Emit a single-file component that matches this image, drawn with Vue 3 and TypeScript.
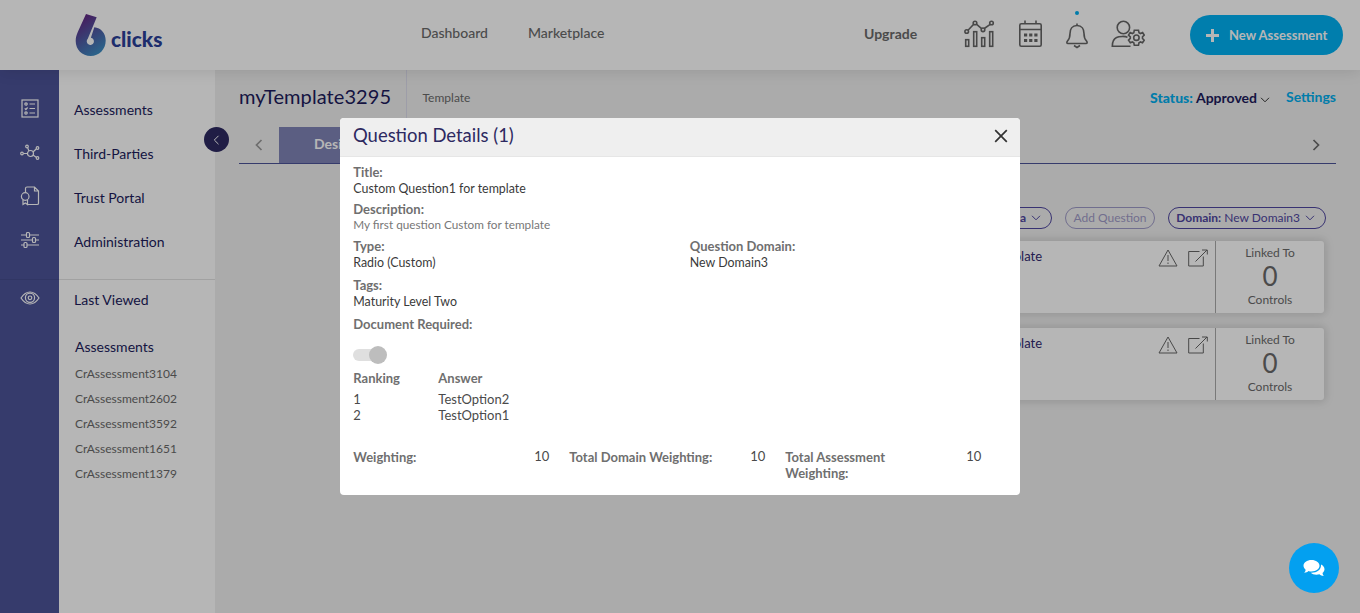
<script setup lang="ts">
interface Detail { label: string; value: string }

const navLinks: string[] = ['Assessments', 'Third-Parties', 'Trust Portal', 'Administration']
const recent: string[] = ['CrAssessment3104', 'CrAssessment2602', 'CrAssessment3592', 'CrAssessment1651', 'CrAssessment1379']
const questions: string[] = ['Custom Question1 for template', 'Custom Question2 for template']
const answers: { rank: number; text: string }[] = [
  { rank: 1, text: 'TestOption2' },
  { rank: 2, text: 'TestOption1' },
]
const weights: Detail[] = [
  { label: 'Weighting:', value: '10' },
  { label: 'Total Domain Weighting:', value: '10' },
  { label: 'Total Assessment Weighting:', value: '10' },
]
</script>

<template>
  <div class="page">
    <header class="topbar">
      <div class="logo">
        <svg width="32" height="44" viewBox="0 0 32 44">
          <defs>
            <linearGradient id="brand" x1="0.2" y1="0" x2="0.7" y2="1">
              <stop offset="0" stop-color="#66207f" />
              <stop offset="0.5" stop-color="#4f59a3" />
              <stop offset="1" stop-color="#3b8fc4" />
            </linearGradient>
          </defs>
          <path fill="url(#brand)" d="M11 1 21.700 4.300 12.800 25.800A3.600 3.600 0 1 0 15.900 24.800L19.300 14.300C26 14.800 30.700 20.500 30.700 27.500 30.700 36.500 24 43 15.700 43 7 43 .7 36.500.7 28 .7 24.500 1.500 22 3 18.500Z" />
        </svg>
        <span class="logo-text">clicks</span>
      </div>
      <nav class="topnav">
        <span>Dashboard</span>
        <span>Marketplace</span>
      </nav>
      <div class="tools">
        <span class="upgrade">Upgrade</span>
        <svg class="ico chart" width="31" height="28" viewBox="0 0 31 28">
          <rect x="1.700" y="19.700" width="3" height="6.600" /><rect x="9.700" y="11.700" width="3" height="14.600" />
          <rect x="17.700" y="17.700" width="3" height="8.600" /><rect x="25.700" y="11.700" width="3" height="14.600" />
          <circle cx="2.700" cy="11.500" r="1.800" /><circle cx="11" cy="3" r="1.800" /><circle cx="19" cy="9.800" r="1.800" /><circle cx="27.500" cy="3" r="1.800" />
          <path d="M4 10.200 9.700 4.300M12.400 4.200 17.600 8.600M20.300 8.500 26.200 4.300" />
        </svg>
        <svg class="ico cal" width="25" height="28" viewBox="0 0 25 28">
          <rect x="1.800" y="3.800" width="21.400" height="22.400" rx="1.500" /><path d="M2 9.500H23M7 0.500V4M18 0.500V4" />
          <path class="dots" d="M6 15H19.500M6 20.500H19.500" stroke-dasharray="3.200 1.950" />
        </svg>
        <div class="bell-wrap">
          <i class="notice"></i>
          <svg class="ico" width="22" height="26" viewBox="0 0 22 26">
            <path d="M11 0.500V3M11 2.500C6 2.500 4 6.500 4 10.500 4 15 3 16.500 1.500 18 0.500 19.500 0.700 20.500 2 20.500H20C21.300 20.500 21.500 19.500 20.500 18 19 16.500 18 15 18 10.500 18 6.500 16 2.500 11 2.500ZM8 22.500 11 24.500 14 22.500" />
          </svg>
        </div>
        <svg class="ico user" width="35" height="28" viewBox="0 0 35 28">
          <circle cx="13.400" cy="7.500" r="6.200" /><path d="M17.500 17.300C15.500 16 9 16.200 6.500 17.500 3 19.200 2.300 22 2.300 26.200H20.500" />
          <path d="m24.300 10.300 4.200 0 .5 2.400 1.500.8 2.100-.9 1.600 2.500-1.700 1.700v1.600l1.700 1.800-1.700 2.500-2-.8-1.500.9-.5 2.400h-4.200l-.5-2.400-1.500-.9-2 .8-1.800-2.500 1.800-1.800v-1.600l-1.800-1.700 1.700-2.500 2.100.9 1.500-.8Z" />
          <circle cx="26.400" cy="17.700" r="2.700" />
        </svg>
        <button class="new-btn"><svg width="13" height="13" viewBox="0 0 13 13"><path d="M6.500 0V13M0 6.500H13" stroke="#fff" stroke-width="3" /></svg>New Assessment</button>
      </div>
    </header>

    <div class="body">
      <aside class="rail">
        <div class="rail-top">
          <svg width="18" height="19" viewBox="0 0 18 19"><rect x="1" y="1" width="16" height="17" /><circle cx="5" cy="5" r="1.200" /><path d="m3.700 9.300 1.200 1.200 1.700-2M8.500 5H14M8.500 9.500H14M8.500 14H14" /><circle cx="5" cy="14" r="1.200" /></svg>
          <svg width="20" height="17" viewBox="0 0 20 17"><circle cx="10.500" cy="9.500" r="3" /><circle cx="2" cy="9.500" r="1.300" /><circle cx="7" cy="2.500" r="1.300" /><circle cx="17.500" cy="4" r="1.300" /><circle cx="17.500" cy="14" r="1.300" /><path d="M3.500 9.500H7.500M7.700 4 9 7M13 8 16.200 5M13 11 16.200 13.200" /></svg>
          <svg width="20" height="20" viewBox="0 0 20 20"><path d="M5.500 6V2.500Q5.500 1 7 1H14.500L18.500 5V17.500Q18.500 18.500 17 18.500H8M14.500 1V5H18.500M3 14V18.500L5.300 17 7.500 18.500V14" /><circle cx="5.200" cy="10.500" r="3.800" /></svg>
          <svg width="20" height="18" viewBox="0 0 20 18"><path d="M1 4H6.500M9.500 4H19M1 9H12.500M15.500 9H19M1 14H4M7 14H19" /><rect x="6.500" y="1.500" width="3" height="5" rx="1" /><rect x="12.500" y="6.500" width="3" height="5" rx="1" /><rect x="4" y="11.500" width="3" height="5" rx="1" /></svg>
        </div>
        <div class="rail-bottom">
          <svg width="20" height="14" viewBox="0 0 20 14"><path d="M1 7Q5 1 10 1T19 7Q15 13 10 13T1 7Z" /><circle cx="10" cy="6.800" r="4.600" /><circle cx="10" cy="6.800" r="1.800" /></svg>
        </div>
      </aside>

      <aside class="side">
        <div class="links"><span v-for="l in navLinks" :key="l">{{ l }}</span></div>
        <div class="recent">
          <span class="last">Last Viewed</span>
          <span class="group">Assessments</span>
          <span v-for="r in recent" :key="r" class="item">{{ r }}</span>
        </div>
        <div class="collapse"><svg width="7" height="10" viewBox="0 0 7 10"><path d="M5.500 .8 1.300 5 5.500 9.200" fill="none" stroke="#fff" /></svg></div>
      </aside>

      <main class="main">
        <div class="heading">
          <h1>myTemplate3295</h1>
          <span class="kind">Template</span>
          <div class="status"><b>Status:</b><span>Approved</span><svg width="10" height="6" viewBox="0 0 10 6"><path d="m1 .8 4 4 4-4" /></svg></div>
          <span class="settings">Settings</span>
        </div>
        <div class="tabs">
          <svg class="prev" width="8" height="12" viewBox="0 0 8 12"><path d="M6.500 1 1.500 6 6.500 11" /></svg>
          <div class="tab">Design</div>
          <svg class="next" width="8" height="12" viewBox="0 0 8 12"><path d="M1.500 1 6.500 6 1.500 11" /></svg>
        </div>
        <div class="pills">
          <div class="pill first"><b>Criteria</b><svg width="10" height="6" viewBox="0 0 10 6"><path d="m1 .8 4 4 4-4" /></svg></div>
          <div class="pill off">Add Question</div>
          <div class="pill domain"><span><b>Domain:</b> New Domain3</span><svg width="10" height="6" viewBox="0 0 10 6"><path d="m1 .8 4 4 4-4" /></svg></div>
        </div>
        <section v-for="q in questions" :key="q" class="card">
          <div class="card-main">
            <span class="q">{{ q }}</span>
            <svg width="20" height="18" viewBox="0 0 20 18"><path d="M10 1 19 17H1ZM10 6V12" /><path d="M10 13.500V15" /></svg>
            <svg width="20" height="18" viewBox="0 0 20 18"><path d="M11.500 2.500H.7V17H15.300V7.500M7.500 12.500 19 1M14 1H19.300V5.500" /></svg>
          </div>
          <div class="linked"><span>Linked To</span><strong>0</strong><span>Controls</span></div>
        </section>
      </main>
    </div>

    <div class="backdrop">
      <div class="modal">
        <div class="modal-head">
          <h2>Question Details (1)</h2>
          <svg width="14" height="14" viewBox="0 0 14 14"><path d="M1.200 1.200 12.800 12.800M12.800 1.200 1.200 12.800" /></svg>
        </div>
        <div class="modal-body">
          <div class="field f1"><b>Title:</b><span>Custom Question1 for template</span></div>
          <div class="field f2"><b>Description:</b><span class="muted">My first question Custom for template</span></div>
          <div class="pair">
            <div class="field"><b>Type:</b><span>Radio (Custom)</span></div>
            <div class="field"><b>Question Domain:</b><span>New Domain3</span></div>
          </div>
          <div class="field f4"><b>Tags:</b><span>Maturity Level Two</span></div>
          <div class="field f5"><b>Document Required:</b></div>
          <div class="toggle"><i></i></div>
          <div class="answers">
            <b>Ranking</b><b>Answer</b>
            <template v-for="a in answers" :key="a.rank"><span>{{ a.rank }}</span><span>{{ a.text }}</span></template>
          </div>
          <div class="weights">
            <div v-for="w in weights" :key="w.label" class="weight"><b>{{ w.label }}</b><span>{{ w.value }}</span></div>
          </div>
        </div>
      </div>
    </div>

    <div class="chat">
      <svg width="22" height="18" viewBox="0 0 22 18"><path fill="#fff" d="M8.500 1C13 1 16.500 3.500 16.500 6.800S13 12.500 8.500 12.500C7.300 12.500 6.500 12.400 5.500 12 4.500 13 3 13.700 1.200 13.700 2 12.800 2.500 12 2.600 10.700 1.300 9.600.5 8.300.5 6.800.5 3.500 4 1 8.500 1ZM18 5.500C20 6.500 21.500 8 21.500 10.200 21.500 11.700 20.700 13 19.500 14 19.600 15.200 20.200 16.200 20.800 17 19 17 17.500 16.300 16.500 15.300 13 16.200 9.500 15.500 7.700 13.700 13.500 14 18.500 11 18 5.500Z" /></svg>
    </div>
  </div>
</template>

<style>
body { margin: 0; overflow: hidden; }
</style>

<style scoped>
* { box-sizing: border-box; }
.page { position: relative; display: flex; flex-direction: column; width: 1360px; height: 613px; overflow: hidden; font-family: Lato, "Open Sans", sans-serif; font-size: 14px; color: #6a6a6a; background: #f0f0f0; font-variant-ligatures: common-ligatures; }
.topbar { position: relative; z-index: 2; display: flex; height: 70px; background: #fff; box-shadow: 0 2px 14px rgba(0, 0, 0, .1); }
.logo { display: flex; width: 421px; padding: 13px 0 0 75px; }
.logo-text { margin: 14px 0 0 4px; font-size: 20.800px; line-height: 24px; font-weight: 900; color: #2a3f99; }
.topnav { display: flex; gap: 40px; padding-top: 24px; font-size: 14px; line-height: 18px; font-weight: 500; width: 443px; }
.tools { display: flex; align-items: flex-start; }
.upgrade { margin-top: 25px; width: 100px; line-height: 18px; font-weight: 700; }
.ico { fill: none; stroke: #666; stroke-width: 1.600; display: block; }
.chart { margin-top: 20px; }
.cal { margin: 20px 0 0 23px; }
.dots { stroke-width: 3.200; }
.bell-wrap { margin: 11px 0 0 23px; display: flex; flex-direction: column; align-items: center; gap: 8px; }
.notice { width: 4px; height: 4px; border-radius: 2px; background: #00aeef; }
.user { margin: 20px 0 0 22px; }
.new-btn { display: flex; align-items: center; gap: 10px; width: 153px; height: 40px; margin: 15px 0 0 45px; padding: 0 0 0 16px; border: 0; border-radius: 20px; background: #00b1f3; color: #fff; font: 700 13px Lato, sans-serif; white-space: nowrap; }
.body { display: flex; flex: 1; }
.rail { width: 59px; background: #4c5398; }
.rail svg { fill: none; stroke: #fff; stroke-width: 1.200; }
.rail-top { display: grid; grid-template-rows: repeat(4, 44px); height: 210px; padding-top: 16px; border-bottom: 1px solid #454c8c; }
.rail-top svg { margin: auto; }
.rail-bottom { display: flex; justify-content: center; padding-top: 11px; }
.side { position: relative; width: 156px; background: #fff; color: #201b5c; font-size: 14px; }
.links { display: flex; flex-direction: column; height: 210px; padding: 18px 0 0 15px; border-bottom: 1px solid #e2e2e2; line-height: 44px; letter-spacing: 0; }
.recent { display: flex; flex-direction: column; padding-left: 15px; }
.last { line-height: 20px; margin-top: 10px; }
.group { padding-left: 1px; line-height: 20px; margin: 27px 0 4px; }
.item { padding-left: 1px; font-size: 12px; line-height: 25px; color: #6a6a6a; }
.collapse { position: absolute; right: -14px; top: 57px; width: 25px; height: 25px; border-radius: 50%; background: #2d2961; display: flex; align-items: center; justify-content: center; }
.main { flex: 1; padding: 0 24px; }
.heading { display: flex; height: 57px; line-height: 20px; }
h1 { margin: 0; width: 168px; padding-top: 16px; font-size: 20px; line-height: 21px; font-weight: 400; letter-spacing: .08px; color: #201b5c; border-right: 1px solid #dcdcec; }
.kind { padding: 18px 0 0 15.500px; font-size: 12px; }
.status { display: flex; gap: 3px; align-items: center; height: 38px; margin-left: auto; padding-top: 18px; font-weight: 700; color: #201b5c; }
.status b, .settings { color: #00aeef; }
.settings { padding: 17px 0 0 16px; font-weight: 700; }
.status svg { margin-top: 4px; fill: none; stroke: #333; }
.tabs { display: flex; align-items: center; height: 37px; border-bottom: 1px solid #4c5398; }
.tabs svg { fill: none; stroke: #6a6a6a; stroke-width: 1.700; }
.tabs .prev { margin: 0 16px; stroke: #999; }
.tab { width: 113px; height: 36px; line-height: 33px; text-align: center; background: #8084b7; color: #fff; font-weight: 700; font-size: 14px; }
.next { margin: 0 16px 0 auto; }
.pills { display: flex; justify-content: flex-end; align-items: center; margin: 43px 10px 12px 0; color: #4f46a0; font-size: 12px; }
.pill { display: flex; align-items: center; justify-content: flex-end; height: 22px; padding: 0 10px 1px 0; border: 1px solid #4f46a0; border-radius: 11px; }
.pill svg { fill: none; stroke: currentColor; }
.first { width: 90px; gap: 5px; margin-right: 13px; }
.off { width: 90px; justify-content: center; padding: 0 0 1px; opacity: .5; margin-right: 13px; }
.domain { width: 158px; gap: 5px; }
.card { display: flex; width: 960px; height: 72px; margin: 0 0 15px 125px; border-radius: 3px; background: #fff; box-shadow: 0 0 8px 2px rgba(0, 0, 0, .13); }
.card-main { display: flex; flex: 1; padding: 8px 7px 0 0; align-items: flex-start; }
.q { width: 678px; text-align: right; font-size: 13px; line-height: 15px; color: #312a70; }
.card-main svg { margin: 0 0 0 10px; fill: none; stroke: #666; }
.card-main .q + svg { margin-left: auto; }
.linked { width: 109px; border-left: 1px solid #aaa; display: flex; flex-direction: column; align-items: center; padding-top: 4px; font-size: 12px; line-height: 16px; }
.linked strong { font-weight: 400; font-size: 26px; line-height: 31px; }
.backdrop { position: absolute; inset: 0; z-index: 10; background: rgba(0, 0, 0, .288); display: flex; justify-content: center; align-items: center; }
.modal { width: 680px; height: 377px; border-radius: 4px; background: #fff; overflow: hidden; }
.modal-head { display: flex; justify-content: space-between; height: 39px; padding: 6px 12px 0 13px; background: #efefef; border-bottom: 1px solid #e6e6e6; }
.modal-head svg { margin: 5px 0 0; fill: none; stroke: #333; stroke-width: 1.700; }
h2 { margin: 0; font-size: 18.450px; line-height: 22px; font-weight: 400; color: #2d2961; }
.modal-body { padding: 7px 13px 8px 13.300px; line-height: 16px; font-size: 13px; }
.modal-body b { color: #6f6f6f; }
.field { display: flex; flex-direction: column; }
.field span { padding-top: 1px; height: 16px; font-size: 12.400px; color: #3a3a3a; }
.field .muted { padding-top: 0; height: 15px; font-size: 11.750px; color: #777; line-height: 15px; }
.f1 { margin-bottom: 5px; }
.f2 { margin-bottom: 6px; }
.pair { display: grid; grid-template-columns: 336.500px 1fr; margin-bottom: 7px; }
.f4 { margin-bottom: 7px; }
.toggle { display: flex; align-items: center; justify-content: flex-end; width: 28px; height: 12px; margin: 17px 0 9px -.3px; border-radius: 6px; background: #dfdfdf; }
.toggle i { flex: none; width: 18px; height: 18px; margin-right: -6px; border-radius: 9px; background: #bdbdbd; }
.answers { display: grid; grid-template-columns: 85px 1fr; }
.answers b { margin-bottom: 5px; }
.answers span { color: #4a4a4a; }
.weights { display: grid; grid-template-columns: repeat(3, 216px); margin-top: 26px; }
.weight { display: flex; justify-content: space-between; padding-right: 20px; }
.weight b { width: 150px; }
.weight span { color: #4a4a4a; margin-top: -1px; }
.chat { position: absolute; z-index: 20; right: 21px; bottom: 20px; width: 50px; height: 50px; border-radius: 25px; background: #03a0f0; display: flex; align-items: center; justify-content: center; }
</style>
